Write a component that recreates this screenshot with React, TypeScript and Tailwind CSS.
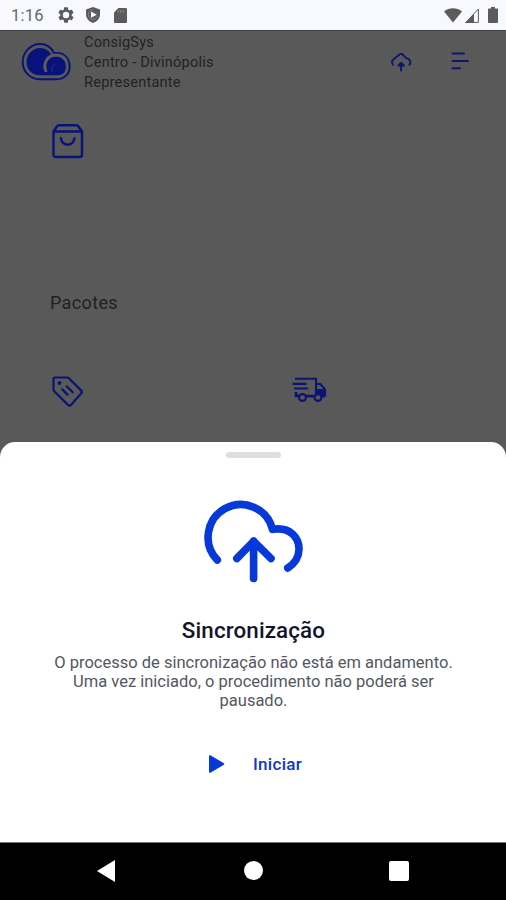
import type { ReactNode } from "react";

function StatusBar() {
  return (
    <div className="flex h-[30px] shrink-0 items-center justify-between bg-[#f8f9fe] pl-[11px] pr-[8px] text-[#5b5b5b]">
      <div className="flex items-center">
        <span className="w-[47px] pt-[1px] text-[16.5px] leading-[30px] tracking-[0.2px] text-[#666]">
          1:16
        </span>
        <svg width="16" height="16" viewBox="2 2 20 20" fill="currentColor">
          <path d="M19.14 12.94c.04-.3.06-.61.06-.94s-.02-.64-.07-.94l2.03-1.58a.49.49 0 0 0 .12-.61l-1.92-3.32a.49.49 0 0 0-.59-.22l-2.39.96a7 7 0 0 0-1.62-.94l-.36-2.54a.48.48 0 0 0-.48-.41h-3.84c-.24 0-.43.17-.47.41l-.36 2.54c-.59.24-1.13.57-1.62.94l-2.39-.96a.48.48 0 0 0-.59.22L2.74 8.87c-.12.21-.08.47.12.61l2.03 1.58a6.4 6.4 0 0 0-.02 1.88l-2.03 1.58a.49.49 0 0 0-.12.61l1.92 3.32c.12.22.37.29.59.22l2.39-.96c.5.38 1.03.7 1.62.94l.36 2.54c.05.24.24.41.48.41h3.84c.24 0 .44-.17.47-.41l.36-2.54a6.8 6.8 0 0 0 1.62-.94l2.39.96c.22.08.47 0 .59-.22l1.92-3.32a.48.48 0 0 0-.12-.61zM12 16a4 4 0 1 1 0-8 4 4 0 0 1 0 8z" />
        </svg>
        <svg className="ml-[12px]" width="14" height="16" viewBox="0 0 14 16">
          <path
            d="M7 0l7 2.6v5C14 11.500 11 14.800 7 16 3 14.800 0 11.500 0 7.600v-5z"
            fill="currentColor"
          />
          <path d="M7 3.100a4.600 4.600 0 1 0 4.300 6.200" fill="none" stroke="#98999c" strokeWidth="0.6" />
          <path d="M5 4.600l5.800 3.100L5 10.800z" fill="#f8f9fe" />
        </svg>
        <svg className="ml-[14px]" width="13" height="15" viewBox="0 0 13 15">
          <path d="M4.400 0H12q1 0 1 1v13q0 1-1 1H1q-1 0-1-1V4.500z" fill="currentColor" />
          <path d="M4.200 2.300v2.500M6.700 2.300v2.500M9.200 2.300v2.500" stroke="#8e8e90" strokeWidth="1" />
        </svg>
      </div>
      <div className="flex items-center">
        <svg width="18" height="15" viewBox="0 0 18 15" fill="currentColor">
          <path d="M0 3.500C5-.9 13-.9 18 3.500L9 14.500z" />
        </svg>
        <svg className="ml-[3px]" width="14" height="15" viewBox="0 0 14 15">
          <path d="M13.400 1v13.400H1z" fill="#f8f9fe" stroke="currentColor" strokeWidth="1" />
          <path d="M0 15L9 5.500V15z" fill="currentColor" />
        </svg>
        <svg className="ml-[9px]" width="10" height="16" viewBox="0 0 10 16" fill="currentColor">
          <path d="M3 0h4v1.500h2q1 0 1 1V15q0 1-1 1H1q-1 0-1-1V2.500q0-1 1-1h2z" />
        </svg>
      </div>
    </div>
  );
}

function Logo() {
  return (
    <svg width="50" height="38" viewBox="22 42 50 38">
      <path
        d="M40.500 78.200C31 78.200 23.700 70.500 23.700 61S31.500 43 41 43c6.500 0 11.500 3.500 14 9.300C64 50.800 70.700 57 70.700 65.300S65 78.200 57.500 78.200z"
        fill="none"
        stroke="#07137a"
        strokeWidth="1.900"
      />
      <path
        d="M41 74.300C33 74.300 27.500 68.500 27.500 61s6-14 13.500-14c5.500 0 9.500 2.800 11.500 7.500C60 53.500 66.800 58 66.800 65.300S63 74.300 57.500 74.300z"
        fill="#07137a"
      />
      <path
        d="M47.200 70.800C43.500 62.500 48 54.300 57 54c4.500 0 8 2 10 5.500"
        fill="none"
        stroke="#5d5d60"
        strokeWidth="3"
      />
      <path
        d="M53.300 70.500c-1.200-3 0-6.300 3-7.500"
        fill="none"
        stroke="#30356e"
        strokeWidth="0.9"
      />
    </svg>
  );
}

function Header() {
  return (
    <header className="flex h-[63px] shrink-0 items-center border-t border-[#414141] pl-[21px] pr-[36px]">
      <Logo />
      <div className="ml-[13px] flex-1 text-[14.6px] leading-[20px] tracking-[0.2px] text-[#222226]">
        <p>ConsigSys</p>
        <p>Centro - Divinópolis</p>
        <p>Representante</p>
      </div>
      <svg width="22" height="19" viewBox="390 51.500 22 19" fill="none" stroke="#0e1670" strokeWidth="1.900" strokeLinecap="round" strokeLinejoin="round">
        <path d="M393 63.300a4.200 4.200 0 0 1 1.800-6.500l5.400-4.300q1-.5 2 0l4.200 4.300a4 4 0 0 1 3 6.500" />
        <path d="M401.100 69v-6.500M398.300 64l2.800-2.800 2.800 2.800z" />
      </svg>
      <svg className="ml-[38px]" width="20" height="20" viewBox="450 52 20 20" stroke="#0e1670" strokeWidth="1.900" strokeLinecap="round">
        <path d="M452.500 53.500h11.500M452.500 61h15.500M452.500 68.200h7.500" />
      </svg>
    </header>
  );
}

function BagIcon() {
  return (
    <svg width="34" height="35" viewBox="51.500 124 34 35" fill="none" stroke="#07137a" strokeWidth="2.400" strokeLinecap="round" strokeLinejoin="round">
      <path d="M54 131.500h28.500v23.300q0 2.200-2.200 2.200H56.200q-2.200 0-2.200-2.200zM54 131.500l3.400-5q.8-1.200 2.300-1.200h17q1.500 0 2.300 1.200l3.500 5" />
      <path d="M61.400 138.300c1.300 8.400 12.200 8.400 13.600 0" />
    </svg>
  );
}

function TagIcon() {
  return (
    <svg width="34" height="32" viewBox="51.500 375 34 32" fill="none" stroke="#0a1474" strokeWidth="2.200" strokeLinecap="round" strokeLinejoin="round">
      <path d="M55.500 376.500h12.200q1 0 1.700.7l12.200 12.200q1.500 1.500 0 3l-10.100 11.500q-1.500 1.500-3 0L54.700 390.300q-.7-.7-.7-1.700v-10.500q0-1.600 1.500-1.600z" />
      <circle cx="60" cy="382" r="1.200" fill="#0a1474" strokeWidth="1.500" />
      <path d="M62.800 388.400l5.200 5.200M67.200 385.300l6 6" strokeWidth="2.200" />
    </svg>
  );
}

function TruckIcon() {
  return (
    <svg width="36" height="26" viewBox="292.500 376.500 36 26" fill="none" stroke="#0a1474" strokeWidth="2.100">
      <path d="M295.500 379.300h21v17M293 384.400h14M294.500 389h14" />
      <path d="M296.500 392.500v3.800h3M306.500 396.700h8.500M322 396.700h3.200" strokeWidth="2.700" />
      <path d="M316.500 384.500h4.300l4.700 5.500v7" />
      <path d="M317.500 390h8v6.500h-8z" fill="#0a1474" strokeWidth="1" />
      <circle cx="303" cy="398" r="3.400" fill="#595959" />
      <circle cx="318.500" cy="398" r="3.400" fill="#595959" />
    </svg>
  );
}

function Card({ icon, label }: { icon: ReactNode; label?: string }) {
  return (
    <div className="flex flex-1 flex-col justify-between rounded-lg border border-[#575757] pb-[24px] pl-[30px] pt-[30px]">
      <div className="pl-[1px]">{icon}</div>
      {label && (
        <p className="text-[18px] leading-[27px] tracking-[0.35px] text-[#202126]">{label}</p>
      )}
    </div>
  );
}

function SyncSheet() {
  return (
    <section className="relative -mt-[10px] flex h-[400px] shrink-0 flex-col items-center rounded-t-[15px] bg-white pl-[1px] pt-[10px]">
      <div className="h-[6px] w-[55px] rounded-full bg-[#dedede]" />
      <svg className="ml-[1px] mt-[40px]" width="104" height="88" viewBox="202 498 104 88" fill="none" stroke="#0739da" strokeWidth="7.600" strokeLinecap="round" strokeLinejoin="round">
        <path d="M217.300 560A32.700 32.700 0 1 1 272.500 529.300C291 526.500 299.300 538.500 299 549.500Q298.700 561 287.700 568" />
        <path d="M253.600 578.500V541M236.800 558.500l16.800-17.200 17.400 17.200" />
      </svg>
      <h1 className="mt-[29px] text-[22.4px] font-medium leading-[30px] tracking-[0.12px] text-[#14152a]">
        Sincronização
      </h1>
      <p className="mt-[8px] text-center text-[16.5px] leading-[19px] text-[#55565f]">
        O processo de sincronização não está em andamento.
        <br />
        Uma vez iniciado, o procedimento não poderá ser
        <br />
        pausado.
      </p>
      <button className="ml-[3px] mt-[42px] flex items-center gap-[28px] text-[17px] font-medium leading-[24px] tracking-[0.3px] text-[#0a38cf]">
        <svg width="17" height="18" viewBox="0 0 17 18" fill="#0739da">
          <path d="M1 1.500Q1-.5 2.800.6L15.500 8q1.500 1 0 2L2.800 17.400Q1 18.500 1 16.500z" />
        </svg>
        Iniciar
      </button>
    </section>
  );
}

function NavBar() {
  return (
    <nav className="flex h-[58px] shrink-0 items-center justify-between border-t border-[#777] bg-black pb-[2px] pl-[97px] pr-[97px]">
      <svg width="18" height="22" viewBox="0 0 18 22" fill="white">
        <path d="M18 0v22L0 11z" />
      </svg>
      <div className="ml-[2px] size-[19px] rounded-full bg-white" />
      <div className="size-[20px] rounded-[2px] bg-white" />
    </nav>
  );
}

export default function App() {
  return (
    <div className="flex h-[900px] w-[506px] flex-col overflow-hidden bg-[#595959] font-['Roboto',sans-serif]">
      <StatusBar />
      <Header />
      <main className="flex h-[359px] shrink-0 flex-col gap-[4px] px-[19px]">
        <div className="flex h-[248px] shrink-0">
          <Card icon={<BagIcon />} label="Pacotes" />
        </div>
        <div className="flex min-h-0 flex-1 gap-[14px]">
          <Card icon={<TagIcon />} />
          <Card icon={<TruckIcon />} />
        </div>
      </main>
      <SyncSheet />
      <NavBar />
    </div>
  );
}
